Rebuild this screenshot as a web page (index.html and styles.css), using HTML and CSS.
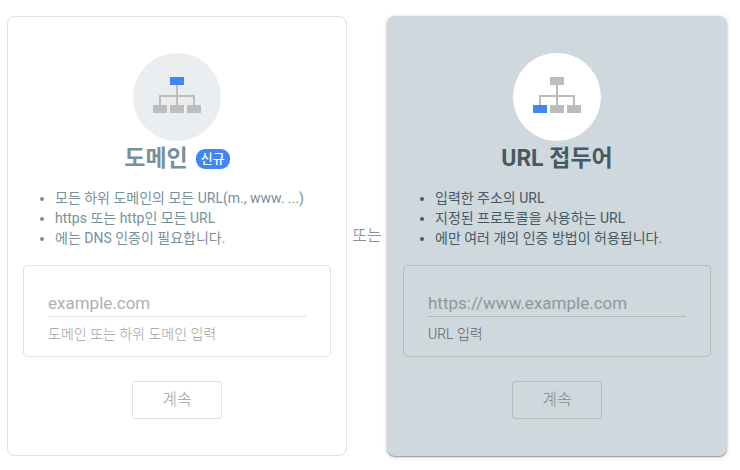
FILE: index.html
```html
<!DOCTYPE html>
<html lang="ko">
<head>
    <meta charset="UTF-8">
    <title>속성 유형 선택</title>
    <link rel="stylesheet" href="styles.css">
</head>
<body>
<div class="types">
    <form class="card">
        <div class="circle">
            <svg width="48" height="36" viewBox="0 0 48 36" shape-rendering="crispEdges">
                <path class="line" d="M23 8h2v10h17v10h-2v-8H25v8h-2v-8H8v8H6V18h17z"/>
                <rect class="on" x="17" y="0" width="14" height="8"/>
                <rect x="0" y="28" width="14" height="8"/>
                <rect x="17" y="28" width="14" height="8"/>
                <rect x="34" y="28" width="14" height="8"/>
            </svg>
        </div>
        <h2>도메인<span class="new">신규</span></h2>
        <ul>
            <li>모든 하위 도메인의 모든 URL(m., www. ...)</li>
            <li>https 또는 http인 모든 URL</li>
            <li>에는 DNS 인증이 필요합니다.</li>
        </ul>
        <div class="field">
            <input type="text" id="domain" placeholder="example.com">
            <label for="domain">도메인 또는 하위 도메인 입력</label>
        </div>
        <button type="button">계속</button>
    </form>
    <div class="or">또는</div>
    <form class="card now">
        <div class="circle">
            <svg width="48" height="36" viewBox="0 0 48 36" shape-rendering="crispEdges">
                <path class="line" d="M23 8h2v10h17v10h-2v-8H25v8h-2v-8H8v8H6V18h17z"/>
                <rect x="17" y="0" width="14" height="8"/>
                <rect class="on" x="0" y="28" width="14" height="8"/>
                <rect x="17" y="28" width="14" height="8"/>
                <rect x="34" y="28" width="14" height="8"/>
            </svg>
        </div>
        <h2>URL 접두어</h2>
        <ul>
            <li>입력한 주소의 URL</li>
            <li>지정된 프로토콜을 사용하는 URL</li>
            <li>에만 여러 개의 인증 방법이 허용됩니다.</li>
        </ul>
        <div class="field">
            <input type="text" id="prefix" placeholder="https://www.example.com">
            <label for="prefix">URL 입력</label>
        </div>
        <button type="button">계속</button>
    </form>
</div>
</body>
</html>
```

FILE: styles.css
```css
*{
    margin: 0;
    padding: 0;
    box-sizing: border-box;
}
body{
    background: #fff;
    font-family: Roboto, "Noto Sans CJK KR", sans-serif;
}
.types{
    display: flex;
    padding: 16px 13px 14px 7px;
}
.card{
    flex: 1;
    min-width: 0;
    display: flex;
    flex-direction: column;
    align-items: center;
    padding: 36px 15px;
    border: 1px solid #e0e0e0;
    border-radius: 8px;
    color: #78909c;
}
.card.now{
    background: #cfd8dd;
    border-color: #cfd8dd;
    box-shadow: 0 1px 1px rgba(0,0,0,.3), 0 1px 4px rgba(0,0,0,.2);
    color: #455a64;
}
.circle{
    display: flex;
    align-items: center;
    justify-content: center;
    width: 88px;
    height: 88px;
    padding-bottom: 4px;
    border-radius: 50%;
    background: #eaeef1;
}
.now .circle{
    background: #fff;
}
.circle svg{
    fill: #bdbdbd;
}
.circle .on{
    fill: #4285f4;
}
h2{
    display: flex;
    align-items: center;
    gap: 8px;
    height: 35px;
    font-size: 23px;
    line-height: 35px;
    font-weight: 700;
}
.new{
    padding: 0 5px;
    border-radius: 9px;
    background: #4285f4;
    color: #fff;
    font-size: 13px;
    line-height: 20px;
    font-weight: 500;
}
ul{
    align-self: stretch;
    margin-top: 12px;
    padding-left: 32px;
    font-size: 14px;
    line-height: 20px;
}
li{
    height: 20px;
}
.field{
    align-self: stretch;
    margin-top: 17px;
    padding: 24px;
    height: 92px;
    border: 1px solid #e0e0e0;
    border-radius: 5px;
}
.field input{
    display: block;
    width: 100%;
    height: 27px;
    border: none;
    border-bottom: 1px solid #e0e0e0;
    outline: none;
    background: none;
    color: #616161;
    font-family: inherit;
    font-size: 17px;
}
.field input::placeholder{
    color: #b0b0b0;
}
.field label{
    display: block;
    margin-top: 7px;
    color: #a0a0a0;
    font-size: 14px;
    line-height: 20px;
    font-weight: 300;
}
button{
    width: 90px;
    height: 38px;
    margin-top: 24px;
    padding-bottom: 4px;
    border: 1px solid #e0e0e0;
    border-radius: 3px;
    background: none;
    color: #a0a0a0;
    font-family: inherit;
    font-size: 16px;
    font-weight: 300;
}
.now .field, .now button{
    border-color: #b5bcc0;
}
.now .field input{
    border-color: #b0b8bc;
}
.now .field input::placeholder{
    color: #909699;
}
.now .field label{
    color: #5c6366;
}
.now button{
    color: #82888b;
}
.or{
    display: flex;
    align-items: center;
    justify-content: center;
    width: 40px;
    padding-bottom: 4px;
    color: #757575;
    font-size: 16px;
    font-weight: 300;
}
```
